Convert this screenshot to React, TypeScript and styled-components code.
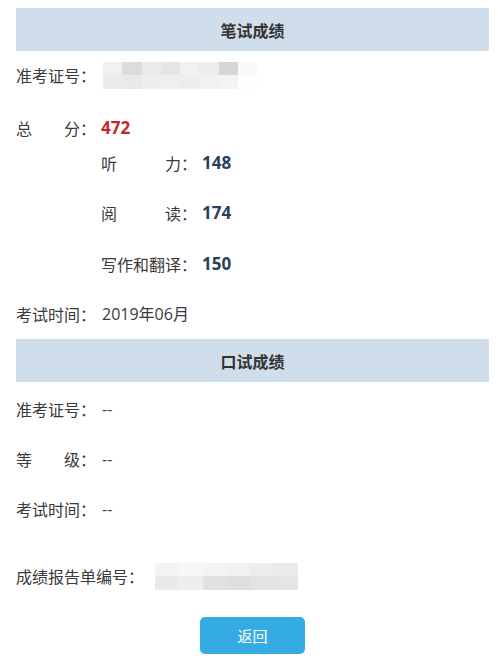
import React from 'react';
import styled, { createGlobalStyle } from 'styled-components';

const GlobalStyle = createGlobalStyle`
  body {
    margin: 0;
    background: #ffffff;
    font-family: "Noto Sans CJK SC", "Noto Sans", sans-serif;
    color: #3a3a3a;
  }
`;

const Page = styled.div`
  width: 498px;
  padding: 8px 9px 0 16px;
  box-sizing: border-box;
`;

const SectionHeader = styled.div`
  height: 43px;
  background: #cfdeea;
  display: flex;
  align-items: center;
  justify-content: center;
  font-size: 16px;
  font-weight: 700;
  color: #333;
`;

const Body = styled.div<{ $top: number; $bottom: number }>`
  display: flex;
  flex-direction: column;
  gap: 30px;
  padding: ${(p) => p.$top}px 0 ${(p) => p.$bottom}px;
`;

const ScoreGroup = styled.div`
  display: flex;
  flex-direction: column;
  gap: 15px;
  margin-top: 3px;
`;

const SubList = styled.div`
  display: flex;
  flex-direction: column;
  gap: 30px;
  margin-left: 85px;
`;

const Row = styled.div<{ $extra?: number }>`
  display: flex;
  align-items: center;
  height: 20px;
  margin-top: ${(p) => p.$extra ?? 0}px;
  font-size: 16px;
  line-height: 20px;
`;

const Label = styled.span<{ $chars: number }>`
  display: flex;
  justify-content: space-between;
  width: ${(p) => p.$chars * 16}px;
  flex: none;
`;

const Colon = styled.span`
  width: 16px;
  flex: none;
  text-align: center;
`;

const Value = styled.span<{ $tone?: 'red' | 'navy' }>`
  margin-left: ${(p) => (p.$tone ? 5 : 6)}px;
  font-family: "Open Sans", "Noto Sans CJK SC", sans-serif;
  font-size: ${(p) => (p.$tone ? 17 : 16)}px;
  font-weight: ${(p) => (p.$tone ? 700 : 400)};
  color: ${(p) => (p.$tone === 'red' ? '#c3282d' : p.$tone === 'navy' ? '#2c3f5a' : '#3a3a3a')};
`;

const Mosaic = styled.div<{ $w: number; $cols: number; $gap: number }>`
  margin-left: ${(p) => p.$gap}px;
  width: ${(p) => p.$w}px;
  height: 27px;
  display: grid;
  grid-template-columns: repeat(${(p) => p.$cols}, 1fr);
  grid-template-rows: 1fr 1fr;
  flex: none;
`;

const Cell = styled.span<{ $c: string }>`
  background: ${(p) => p.$c};
`;

const Footer = styled.div`
  display: flex;
  justify-content: center;
  padding-top: 31px;
`;

const BackButton = styled.button`
  width: 105px;
  height: 37px;
  border: none;
  border-radius: 5px;
  background: #35abe3;
  color: #ffffff;
  font-family: "Noto Sans CJK SC", sans-serif;
  font-size: 15px;
  cursor: pointer;
`;

const Field = ({
  label,
  chars = 4,
  extra,
  children,
}: {
  label: string;
  chars?: number;
  extra?: number;
  children?: React.ReactNode;
}) => (
  <Row $extra={extra}>
    <Label $chars={chars}>
      {label.split('').map((c, i) => (
        <span key={i}>{c}</span>
      ))}
    </Label>
    <Colon>：</Colon>
    {children}
  </Row>
);

const Blur = ({ cells, w, gap }: { cells: string[][]; w: number; gap: number }) => (
  <Mosaic $w={w} $cols={cells[0].length} $gap={gap}>
    {cells.flat().map((c, i) => (
      <Cell key={i} $c={c} />
    ))}
  </Mosaic>
);

const idCells = [
  ['#f1f1f1', '#dcdcdc', '#ebebeb', '#e6e6e6', '#f1f1f1', '#ececec', '#d6d6d6', '#fafafa'],
  ['#ebebeb', '#e9e9e9', '#eeeeee', '#efefef', '#ededed', '#f1f1f1', '#f3f3f3', '#fdfdfd'],
];

const reportCells = [
  ['#f3f3f3', '#f7f7f7', '#f4f4f4', '#f1f1f1', '#ededed', '#ebebeb'],
  ['#e9e9e9', '#eeeeee', '#e1e1e1', '#dfdfdf', '#e3e3e3', '#e5e5e5'],
];

export default function App() {
  return (
    <Page>
      <GlobalStyle />
      <SectionHeader>笔试成绩</SectionHeader>
      <Body $top={14} $bottom={15}>
        <Field label="准考证号">
          <Blur cells={idCells} w={154} gap={7} />
        </Field>
        <ScoreGroup>
          <Field label="总分">
            <Value $tone="red">472</Value>
          </Field>
          <SubList>
            <Field label="听力" chars={5}>
              <Value $tone="navy">148</Value>
            </Field>
            <Field label="阅读" chars={5}>
              <Value $tone="navy">174</Value>
            </Field>
            <Field label="写作和翻译" chars={5} extra={1}>
              <Value $tone="navy">150</Value>
            </Field>
          </SubList>
        </ScoreGroup>
        <Field label="考试时间">
          <Value>2019年06月</Value>
        </Field>
      </Body>
      <SectionHeader>口试成绩</SectionHeader>
      <Body $top={17} $bottom={0}>
        <Field label="准考证号">
          <Value>--</Value>
        </Field>
        <Field label="等级">
          <Value>--</Value>
        </Field>
        <Field label="考试时间">
          <Value>--</Value>
        </Field>
        <Row $extra={17}>
          <Label $chars={7}>成绩报告单编号</Label>
          <Colon>：</Colon>
          <Blur cells={reportCells} w={143} gap={11} />
        </Row>
      </Body>
      <Footer>
        <BackButton>返回</BackButton>
      </Footer>
    </Page>
  );
}
